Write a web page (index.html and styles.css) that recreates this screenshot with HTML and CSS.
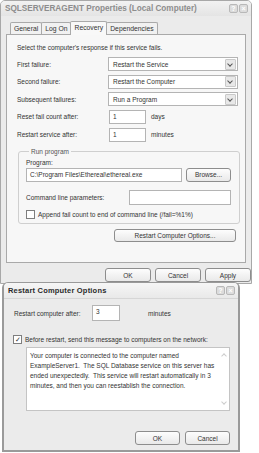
FILE: index.html
```html
<!DOCTYPE html>
<html lang="en">
<head>
  <meta charset="UTF-8" />
  <title>SQLSERVERAGENT Properties</title>
  <link rel="stylesheet" href="styles.css">
</head>
<body>
  <div class="win props">
    <div class="titlebar">
      <span class="title">SQLSERVERAGENT Properties (Local Computer)</span>
      <span class="caps"><span class="cap">?</span><span class="cap">&#215;</span></span>
    </div>
    <div class="tabs">
      <span class="tab">General</span>
      <span class="tab">Log On</span>
      <span class="tab active">Recovery</span>
      <span class="tab">Dependencies</span>
    </div>
    <div class="panel">
      <p class="intro">Select the computer's response if this service fails.</p>
      <div class="row"><span class="lbl">First failure:</span><span class="select">Restart the Service<i class="arrow"></i></span></div>
      <div class="row"><span class="lbl">Second failure:</span><span class="select">Restart the Computer<i class="arrow"></i></span></div>
      <div class="row"><span class="lbl">Subsequent failures:</span><span class="select">Run a Program<i class="arrow"></i></span></div>
      <div class="row num"><span class="lbl">Reset fail count after:</span><span class="input small">1</span><span class="unit">days</span></div>
      <div class="row num"><span class="lbl">Restart service after:</span><span class="input small">1</span><span class="unit">minutes</span></div>
      <fieldset class="group">
        <legend>Run program</legend>
        <div class="glbl">Program:</div>
        <div class="prog">
          <span class="input path">C:\Program Files\Ethereal\ethereal.exe</span>
          <span class="btn browse">Browse...</span>
        </div>
        <div class="cmd">
          <span class="glbl">Command line parameters:</span>
          <span class="input params"></span>
        </div>
        <div class="check"><span class="box"></span>Append fail count to end of command line (/fail=%1%)</div>
      </fieldset>
      <div class="rco"><span class="btn wide">Restart Computer Options...</span></div>
    </div>
    <div class="actions">
      <span class="btn">OK</span>
      <span class="btn">Cancel</span>
      <span class="btn">Apply</span>
    </div>
  </div>

  <div class="win restart">
    <div class="titlebar">
      <span class="title bold">Restart Computer Options</span>
      <span class="caps"><span class="cap">?</span><span class="cap">&#215;</span></span>
    </div>
    <div class="rbody">
      <div class="rrow"><span class="rlbl">Restart computer after:</span><span class="input mins">3</span><span class="unit">minutes</span></div>
      <div class="check msg"><span class="box checked">&#10003;</span>Before restart, send this message to computers on the network:</div>
      <div class="message">
        <p>Your computer is connected to the computer named ExampleServer1.&nbsp; The SQL Database service on this server has ended unexpectedly.&nbsp; This service will restart automatically in 3 minutes, and then you can reestablish the connection.</p>
        <span class="scroll up"></span>
        <span class="scroll down"></span>
      </div>
      <div class="ractions">
        <span class="btn">OK</span>
        <span class="btn">Cancel</span>
      </div>
    </div>
  </div>
</body>
</html>
```

FILE: styles.css
```css
* { box-sizing: border-box; margin: 0; padding: 0; }
body {
  background: #fff;
  font-family: 'Liberation Sans', Arial, sans-serif;
  font-size: 6.5px;
  color: #333;
  width: 259px;
  height: 453px;
  overflow: hidden;
}
.win {
  background: #ebebeb;
  border: 1px solid #a8a8a8;
  border-radius: 5px 5px 0 0;
}
.props { width: 252px; height: 284px; }
.titlebar {
  height: 15px;
  display: flex;
  align-items: center;
  justify-content: space-between;
  padding: 0 3px 0 4px;
  background: linear-gradient(#f2f2f2, #e4e4e4);
  border-radius: 4px 4px 0 0;
}
.title { font-size: 8.2px; color: #8d8d8d; font-weight: bold; }
.title.bold { color: #2a2a2a; font-size: 7.5px; letter-spacing: 0.2px; }
.caps { display: flex; gap: 1px; }
.cap {
  width: 9px; height: 9px;
  border: 1px solid #b8b8b8;
  border-radius: 2px;
  background: #dcdcdc;
  color: #fff;
  font-size: 7px;
  line-height: 7px;
  text-align: center;
  font-weight: bold;
}
.tabs {
  display: flex;
  align-items: flex-end;
  padding-left: 9px;
  margin-top: 5px;
  height: 13px;
}
.tab {
  height: 12px;
  padding: 0 3px;
  border: 1px solid #a9a9a9;
  border-bottom: none;
  border-radius: 2px 2px 0 0;
  background: #f1f1f1;
  line-height: 12px;
  font-size: 6.8px;
  margin-right: -1px;
}
.tab.active {
  height: 14px;
  background: #f8f8f8;
  position: relative;
  z-index: 1;
  margin-bottom: -1px;
  line-height: 11px;
}
.panel {
  margin: 0 5px;
  height: 229px;
  border: 1px solid #a9a9a9;
  background: #f7f7f7;
  padding: 8px 7px 0 10px;
}
.intro { height: 13px; line-height: 9px; margin-bottom: 1px; }
.row {
  display: flex;
  align-items: center;
  height: 14px;
  margin-bottom: 3.5px;
}
.row.num { margin-bottom: 4px; }
.lbl { width: 91px; }
.select {
  flex: 1;
  height: 14px;
  background: #fff;
  border: 1px solid #b4b4b4;
  display: flex;
  align-items: center;
  justify-content: space-between;
  padding: 0 1px 0 4px;
}
.arrow {
  width: 11px; height: 11px;
  background: #e8e8e8;
  border: 1px solid #c9c9c9;
  border-radius: 1px;
  position: relative;
}
.arrow::after {
  content: '';
  position: absolute;
  left: 2px; top: 2px;
  width: 3px; height: 3px;
  border-right: 1.3px solid #555;
  border-bottom: 1.3px solid #555;
  transform: rotate(45deg);
}
.input {
  background: #fff;
  border: 1px solid #b4b4b4;
  height: 14px;
  line-height: 10px;
  padding: 1px 3px;
}
.small { width: 37px; margin-left: 1px; }
.unit { margin-left: 5px; }
.group {
  margin: 6px 2px 0 1px;
  border: 1px solid #cfcfcf;
  border-radius: 3px;
  height: 76px;
  padding: 0 8px 0 7px;
}
.group legend { padding: 0 2px; margin-left: 3px; color: #555; line-height: 7px; }
.glbl { line-height: 9px; }
.group > .glbl { margin-top: 3px; }
.prog { display: flex; gap: 4px; margin-top: 1px; }
.path { width: 156px; }
.btn {
  display: inline-flex;
  align-items: center;
  justify-content: center;
  height: 14px;
  border: 1px solid #8d8d8d;
  border-radius: 3px;
  background: linear-gradient(#fdfdfd, #e9e9e9);
}
.browse { width: 45px; }
.cmd { display: flex; align-items: center; margin-top: 8px; }
.cmd .glbl { width: 103px; }
.params { width: 102px; height: 15px; }
.check { display: flex; align-items: center; gap: 3px; margin-top: 5px; }
.box {
  width: 9px; height: 9px;
  border: 1px solid #7e7e7e;
  background: #fff;
  font-size: 7px;
  line-height: 7px;
  text-align: center;
  color: #333;
}
.rco { display: flex; justify-content: flex-end; margin-top: 5px; padding-right: 2px; }
.wide { width: 122px; height: 13px; }
.actions {
  display: flex;
  justify-content: flex-end;
  gap: 4px;
  padding: 5px 0 0 0;
}
.actions .btn { width: 46px; }

.restart {
  width: 238px;
  height: 170px;
  margin-left: 2px;
  margin-top: -2px;
  position: relative;
  border-color: #9a9a9a;
  border-width: 1px 2px 2px 2px;
  border-radius: 6px 6px 0 0;
}
.restart .titlebar { background: linear-gradient(#f6f6f6, #e9e9e9); height: 16px; border-bottom: 1px solid #d6d6d6; }
.rbody { padding: 6px 8px 0 10px; }
.rrow { display: flex; align-items: center; height: 16px; }
.rlbl { width: 78px; }
.mins { width: 28px; height: 16px; }
.rrow .unit { margin-left: 28px; }
.check.msg { margin-top: 14px; margin-left: -1px; }
.message {
  position: relative;
  margin: 3px 0 0 12px;
  height: 64px;
  background: #fff;
  border: 1px solid #c4c4c4;
  padding: 3px 14px 0 3px;
  line-height: 10px;
}
.scroll {
  position: absolute;
  right: 3px;
  width: 4px; height: 4px;
  border-left: 1px solid #ccc;
  border-top: 1px solid #ccc;
}
.scroll.up { top: 6px; transform: rotate(45deg); }
.scroll.down { bottom: 6px; transform: rotate(225deg); }
.ractions { display: flex; justify-content: flex-end; gap: 5px; margin-top: 20px; padding-right: 0; }
.ractions .btn { width: 45px; }
```
